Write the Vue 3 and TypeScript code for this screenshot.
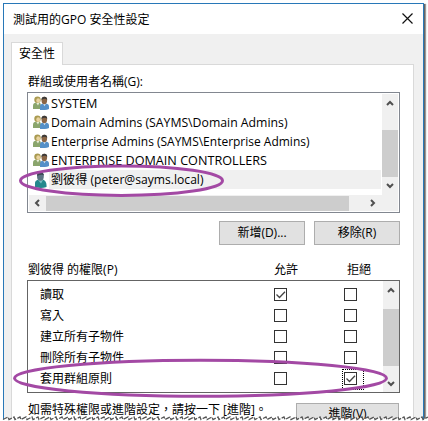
<script setup lang="ts">
interface Principal {
  name: string
  kind: 'group' | 'user'
  width: number
}
interface Permission {
  name: string
  allow: boolean
  deny: boolean
}

const principals: Principal[] = [
  { name: 'SYSTEM', kind: 'group', width: 46.5 },
  { name: 'Domain Admins (SAYMS\\Domain Admins)', kind: 'group', width: 236.5 },
  { name: 'Enterprise Admins (SAYMS\\Enterprise Admins)', kind: 'group', width: 258.5 },
  { name: 'ENTERPRISE DOMAIN CONTROLLERS', kind: 'group', width: 216 },
  { name: '劉彼得 (peter@sayms.local)', kind: 'user', width: 152.5 },
]

const permissions: Permission[] = [
  { name: '讀取', allow: true, deny: false },
  { name: '寫入', allow: false, deny: false },
  { name: '建立所有子物件', allow: false, deny: false },
  { name: '刪除所有子物件', allow: false, deny: false },
  { name: '套用群組原則', allow: false, deny: true },
]

// Slanted teeth of the torn lower edge: a slow rise, then a sharp drop
const tear = Array.from({ length: 71 }, (_, i) => `${3 + i * 6},419.5 ${8 + i * 6},417`).join(' ')
</script>

<template>
  <div class="stage">
    <div class="dialog">
      <header class="title">
        <span>測試用的GPO 安全性設定</span>
        <svg width="11" height="11" viewBox="0 0 11 11"><path d="M.5.5l10 10M10.5.5l-10 10" stroke="#111" stroke-width="1.2" /></svg>
      </header>
      <div class="body">
        <div class="tab">安全性</div>
        <section class="page">
          <div class="label">群組或使用者名稱(G):</div>
          <div class="names">
            <div class="upper">
              <ul>
                <li v-for="p in principals" :key="p.name" :class="p.kind">
                  <svg v-if="p.kind === 'group'" class="icon" width="16" height="14" viewBox="0 0 16 14">
                    <path d="M0 13V9.500Q0 7 3 6.500H6Q8 7 8 9.500V13Z" fill="#8aa56c" />
                    <path d="M3 6.500l2 3 1.500-3Z" fill="#e8edd8" />
                    <circle cx="4.500" cy="3.800" r="3.200" fill="#a99a50" />
                    <ellipse cx="5.200" cy="4.600" rx="1.900" ry="2.400" fill="#e9d3a0" />
                    <path d="M7 14V10.500Q7 8 10 7.500H13Q16 8 16 10.500V13Q12 14.500 7 14Z" fill="#5590c8" />
                    <path d="M10 7.500l1.500 2.800 1.500-2.800Z" fill="#d7e7f5" />
                    <ellipse cx="11.300" cy="4.500" rx="2.800" ry="3.700" fill="#8a6545" />
                    <path d="M8.400 4Q8.500.7 11.400.7T14.200 4Q12 1.700 8.400 4Z" fill="#3d3a38" />
                  </svg>
                  <svg v-else class="icon" width="16" height="16" viewBox="0 0 16 16">
                    <path d="M2 15V11Q2 8 6 7.500H10Q14 9 13.500 15Q8 17 2 15Z" fill="#23888c" />
                    <path d="M5 8l3 3.500L10 8Z" fill="#75bfc2" />
                    <ellipse cx="7.400" cy="4.500" rx="3.400" ry="4.200" fill="#5c7583" />
                    <path d="M4 4Q4 .2 7.500.2T11 4Q10 1.500 4 4Z" fill="#3b4853" />
                  </svg>
                  <div class="cell">
                    <svg class="name" :width="p.width + 4" height="19"><text x="2" y="14" :textLength="p.width" lengthAdjust="spacingAndGlyphs">{{ p.name }}</text></svg>
                  </div>
                </li>
              </ul>
              <div class="vbar">
                <svg width="8" height="6" viewBox="0 0 8 6"><path d="M1 5l3-3 3 3" /></svg>
                <i></i>
                <svg width="8" height="6" viewBox="0 0 8 6"><path d="M1 1l3 3 3-3" /></svg>
              </div>
            </div>
            <div class="hbar">
              <svg width="6" height="8" viewBox="0 0 6 8"><path d="M5 1L2 4l3 3" /></svg>
              <i></i>
              <svg width="6" height="8" viewBox="0 0 6 8"><path d="M1 1l3 3-3 3" /></svg>
            </div>
          </div>
          <div class="buttons">
            <button>新增(D)...</button>
            <button>移除(R)</button>
          </div>
          <div class="heads"><span>劉彼得 的權限(P)</span><span>允許</span><span>拒絕</span></div>
          <div class="perms">
            <ul>
              <li v-for="p in permissions" :key="p.name">
                <span>{{ p.name }}</span>
                <div class="box"><svg v-if="p.allow" width="11" height="11" viewBox="0 0 11 11"><path d="M1.500 5.500l3 3L10 2.700" /></svg></div>
                <div class="box" :class="{ focused: p.deny }"><svg v-if="p.deny" width="11" height="11" viewBox="0 0 11 11"><path d="M1.500 5.500l3 3L10 2.700" /></svg></div>
              </li>
            </ul>
            <div class="vbar">
              <svg width="8" height="6" viewBox="0 0 8 6"><path d="M1 5l3-3 3 3" /></svg>
              <i></i>
              <svg width="8" height="6" viewBox="0 0 8 6"><path d="M1 1l3 3 3-3" /></svg>
            </div>
          </div>
          <div class="advanced">
            <span>如需特殊權限或進階設定，請按一下 [進階]。</span>
            <button>進階(V)</button>
          </div>
        </section>
      </div>
    </div>
    <svg class="marks" width="428" height="421" viewBox="0 0 428 421">
      <polygon :points="`${tear} 428,421 0,421 0,418`" fill="#fff" />
      <polyline :points="tear" fill="none" stroke="#555" stroke-width="1.300" stroke-dasharray="5 1.400" />
      <g fill="none" stroke="#a349a4" stroke-width="3">
        <ellipse cx="121.500" cy="180.700" rx="101" ry="14.700" />
        <ellipse cx="200.500" cy="378.200" rx="186" ry="18" />
      </g>
    </svg>
  </div>
</template>

<style>
body { margin: 0; background: #fff; overflow: hidden; }
</style>

<style scoped>
* { box-sizing: border-box; }
.stage { position: relative; width: 428px; height: 421px; padding: 3px 0 0 3px; overflow: hidden; font: 375 12px/18px "Open Sans", "Noto Sans CJK TC", sans-serif; color: #000; white-space: nowrap; }
.dialog { width: 421px; height: 430px; border: 1px solid #2878b8; background: #f0f0f0; box-shadow: 1px 1px 0 #666, 2px 1px 1px #999; }
.title { height: 30px; background: #fff; display: flex; justify-content: space-between; align-items: center; padding: 0 10px 0 9px; }
.title span { padding-top: 2px; }
.title svg { margin-bottom: 2px; }
.body { padding: 8px 9px 0 7px; }
.tab { position: relative; width: 52px; height: 23px; margin-bottom: -1px; padding: 2px 0 0 7px; border: 1px solid #d9d9d9; border-bottom: 0; background: #fff; }
.page { height: 370px; border: 1px solid #d9d9d9; background: #fff; padding: 8px 12px 0 15px; }
.label { height: 19px; padding-left: 1px; }
ul { list-style: none; margin: 0; padding: 0; }
.names { width: 373px; height: 121px; border: 1px solid #828790; padding: 1px; }
.upper { display: flex; height: 101px; }
.upper ul { flex: 1; }
.upper li { display: flex; height: 19px; }
.icon { margin: 2px 0 0 4px; flex: none; }
.cell { flex: 1; margin-right: 1px; }
.user .cell { background: #f0f0f0; }
.name { display: block; overflow: visible; }
.vbar { display: flex; flex-direction: column; align-items: center; width: 16px; background: #f0f0f0; flex: none; }
.vbar i { width: 16px; background: #cdcdcd; }
.vbar svg, .hbar svg { fill: none; stroke: #505050; stroke-width: 2; }
.upper .vbar svg { margin: 6px 0; }
.upper .vbar i { height: 47px; margin-top: 18px; }
.hbar { height: 16px; display: flex; align-items: center; background: #f0f0f0; padding-left: 5px; }
.hbar i { width: 303px; height: 15px; margin: 0 21px 0 6px; background: #cdcdcd; }
.buttons { display: flex; gap: 9px; padding: 8px 0 0 192px; }
button { font: inherit; color: inherit; width: 86px; height: 24px; padding: 0; border: 1px solid #adadad; background: #e1e1e1; }
.heads { display: grid; grid-template-columns: 246px 73px 1fr; padding: 16px 0 1px 1px; }
.perms { display: flex; width: 373px; height: 113px; border: 1px solid #646464; }
.perms ul { flex: 1; padding-top: 3px; }
.perms li { display: grid; grid-template-columns: 234px 70px 1fr; align-items: center; height: 21px; padding-left: 12px; }
.box { position: relative; width: 13px; height: 13px; border: 1px solid #333; }
.box svg { display: block; fill: none; stroke: #444; stroke-width: 1.300; }
.focused::after { content: ""; position: absolute; left: -3px; top: -4px; width: 20px; height: 19px; border: 1px dotted #000; }
.perms .vbar svg { margin: 6px 0 0; }
.perms .vbar i { height: 57px; margin-top: 16px; }
.perms .vbar svg:last-child { margin-top: 15px; }
.advanced { display: flex; padding: 8px 0 0 1px; justify-content: space-between; }
.advanced button { width: 103px; margin: 2px 2px 0 0; padding-bottom: 3px; }
.marks { position: absolute; left: 0; top: 0; }
</style>
